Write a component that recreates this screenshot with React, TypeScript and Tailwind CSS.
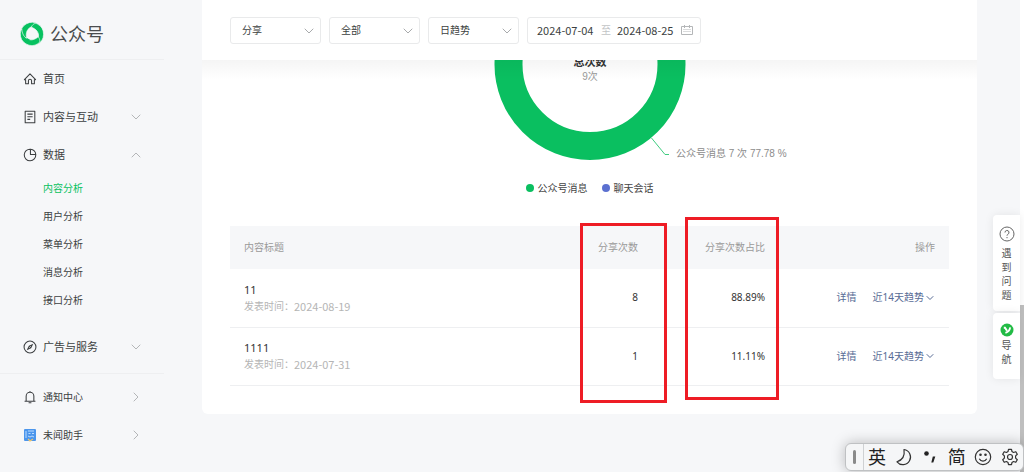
import type { ReactNode } from "react";
import { ChevronDown, ChevronRight, ChevronUp } from "lucide-react";

const SUB_ITEMS = ["内容分析", "用户分析", "菜单分析", "消息分析", "接口分析"];

const FILTERS = [
  { label: "指标", value: "分享" },
  { label: "渠道", value: "全部" },
  { label: "趋势", value: "日趋势" },
];

const ROWS = [
  { title: "11", date: "2024-08-19", count: 8, ratio: "88.89%" },
  { title: "1111", date: "2024-07-31", count: 1, ratio: "11.11%" },
];

function Logo() {
  const blade = "M.6 12.500A11.500 11.500 0 0 1 18.600 2.400C20 3.400 21 4.500 21.600 5.800C16.500 2.800 9.500 3.600 7 9C6.100 11.200 6 13.600 6.600 16C3.600 16.400 .8 15.500 .6 12.500Z";
  return (
    <svg viewBox="0 0 24 24" className="h-6 w-6" fill="#07c160" stroke="#f6f7f9" strokeWidth="0.6">
      <path d={blade} />
      <path d={blade} transform="rotate(120 12 12)" />
      <path d={blade} transform="rotate(240 12 12)" />
      <path d="M6.500 19.500V15.800l3.800 2.200z" stroke="none" />
    </svg>
  );
}

function Glyph({ children }: { children: ReactNode }) {
  return (
    <svg viewBox="0 0 16 16" className="h-3.5 w-3.5 shrink-0" fill="none" stroke="#3c3f41" strokeWidth="1.2" strokeLinejoin="round">
      {children}
    </svg>
  );
}

const HomeGlyph = <Glyph><path d="M3 8.800H1.600L8 2.200l6.400 6.600H13v4.700H9.800V10a1.800 1.800 0 0 0-3.600 0v3.500H3z" /></Glyph>;
const DocGlyph = <Glyph><path d="M2.5 1.5h11v13h-11zM5 4.7h6M5 7.7h6M5 10.7h3.2" /></Glyph>;
const PieGlyph = <Glyph><path d="M14.600 7.500A6.600 6.600 0 1 1 8.500 1.400v6.100z" /><path d="M8.500 1.400a6.600 6.600 0 0 1 6.100 6.100" /></Glyph>;
const CompassGlyph = <Glyph><circle cx="8" cy="8" r="6.8" /><path d="M11.8 4.2L9.3 9.300 4.200 11.800 6.700 6.700z" fill="#3c3f41" stroke="none" /><path d="M7.2 8.8l1.600-1.600" stroke="#f6f7f9" strokeWidth="1" /></Glyph>;
const BellGlyph = <Glyph><path d="M1.800 12.800h12.400M3.600 12.800V7a4.400 4.400 0 0 1 8.800 0v5.800M8 2.600V1.200M6.400 14.600h3.200" /></Glyph>;
const HelperGlyph = (
  <svg viewBox="0 0 14 14" className="h-3.5 w-3.5 shrink-0">
    <rect x="1" y="1" width="12" height="12" rx="1" fill="#4c96ec" />
    <path d="M3 3v7M5 3h6M5.5 5.5h2M9 5.5h2M5 8l2 1 2-1 2 1" stroke="#bcdcff" strokeWidth="1" fill="none" />
    <path d="M5 11l2 2 3-2" stroke="#efc46a" strokeWidth="1.2" fill="none" />
  </svg>
);

function NavItem({ icon, label, arrow, small }: { icon: ReactNode; label: string; arrow?: "up" | "down" | "right"; small?: boolean }) {
  const Arrow = arrow === "up" ? ChevronUp : arrow === "right" ? ChevronRight : ChevronDown;
  return (
    <a href="#" className="flex h-[38px] items-center pl-[23px] pr-[58px]">
      {icon}
      <span className={small ? "ml-1.5 text-[10px]" : "ml-1.5 text-[11px]"}>{label}</span>
      {arrow && <Arrow className="ml-auto h-4 w-4 text-[#b4b6b8]" strokeWidth={1.5} />}
    </a>
  );
}

function Sidebar() {
  return (
    <nav className="w-[202px] shrink-0">
      <div className="mr-[38px] flex h-[60px] items-center border-b border-[#eeeff1] pl-5 pt-2">
        <Logo />
        <span className="ml-1.5 text-lg leading-6 text-[#4a4c4e]">公众号</span>
      </div>
      <NavItem icon={HomeGlyph} label="首页" />
      <NavItem icon={DocGlyph} label="内容与互动" arrow="down" />
      <NavItem icon={PieGlyph} label="数据" arrow="up" />
      <ul>
        {SUB_ITEMS.map((item, i) => (
          <li key={item}>
            <a href="#" className={i === 0 ? "flex h-7 items-center pl-[43px] text-[10px] text-[#07c160]" : "flex h-7 items-center pl-[43px] text-[10px]"}>
              {item}
            </a>
          </li>
        ))}
      </ul>
      <div className="mt-3.5">
        <NavItem icon={CompassGlyph} label="广告与服务" arrow="down" />
      </div>
      <div className="mr-[38px] h-2 border-b border-[#eeeff1]" />
      <div className="pt-1">
        <NavItem icon={BellGlyph} label="通知中心" arrow="right" small />
        <NavItem icon={HelperGlyph} label="未闻助手" arrow="right" small />
      </div>
    </nav>
  );
}

const dateFont = "font-['Noto_Sans_CJK_SC',sans-serif] text-[11px]";

function Filters() {
  return (
    <div className="flex h-[60px] items-center gap-2 px-7">
      {FILTERS.map((filter) => (
        <div key={filter.label} className="relative">
          <select aria-label={filter.label} className="block h-[27px] w-[91px] appearance-none rounded-[3px] border border-[#e9eaeb] bg-white pl-[11px] text-[10px] text-[#3c3f41]">
            <option>{filter.value}</option>
          </select>
          <ChevronDown className="pointer-events-none absolute right-1 top-1.5 h-4 w-4 text-[#a8aaac]" strokeWidth={1.5} />
        </div>
      ))}
      <div className="flex h-[27px] w-[174px] items-center justify-between rounded-[3px] border border-[#e9eaeb] pl-[9px] pr-[7px] text-[#3c3f41]">
        <input aria-label="开始日期" defaultValue="2024-07-04" className={`w-[58px] ${dateFont}`} />
        <span className="text-[10px] text-[#c2c4c6]">至</span>
        <input aria-label="结束日期" defaultValue="2024-08-25" className={`w-[58px] ${dateFont}`} />
        <svg viewBox="0 0 12 12" className="h-3 w-3" fill="none" stroke="#b4b6b8">
          <path d="M.5 2.5h11v8H.5zM3.5 1v3M8.5 1v3" />
          <path d="M2.5 5.5h7M2.5 7.5h7" strokeDasharray="1 1" />
        </svg>
      </div>
    </div>
  );
}

function ShareChart() {
  return (
    <div className="relative flex flex-col items-center">
      <svg width="400" height="118" viewBox="0 0 400 118">
        <circle cx="200" cy="4.5" r="81.5" fill="none" stroke="#0abf60" strokeWidth="28" />
        <text x="200" y="6" textAnchor="middle" fontSize="11" fontWeight="700" fill="#333">总次数</text>
        <text x="200" y="20" textAnchor="middle" fontSize="10" fill="#999" className="font-['Liberation_Sans','Noto_Sans_CJK_SC',sans-serif]">9次</text>
        <path d="M261.500 78L275 94.500h4" fill="none" stroke="#3fcd80" />
        <text x="286" y="97" fontSize="10" fill="#8c8c8c" className="font-['Liberation_Sans','Noto_Sans_CJK_SC',sans-serif]">公众号消息 7 次 77.78 %</text>
      </svg>
      <div className="pointer-events-none absolute inset-x-0 top-0 h-5 bg-linear-to-b from-black/4 to-transparent" />
      <div className="flex h-5 items-center gap-3.5 text-[10px] text-[#444]">
        <span className="flex items-center gap-1"><i className="h-2 w-2 rounded-full bg-[#0abf60]" />公众号消息</span>
        <span className="flex items-center gap-1"><i className="h-2 w-2 rounded-full bg-[#5b70d0]" />聊天会话</span>
      </div>
    </div>
  );
}

function ShareTable() {
  return (
    <div className="relative mx-7 mt-7">
      <table className="w-full table-fixed text-[10px]">
        <thead className="bg-[#f6f7f9] text-[#9a9a9a]">
          <tr className="h-[43px]">
            <th className="px-3.5 text-left font-normal">内容标题</th>
            <th className="w-[110px] px-3.5 text-right font-normal">分享次数</th>
            <th className="w-[127px] px-3.5 text-right font-normal">分享次数占比</th>
            <th className="w-[170px] px-3.5 text-right font-normal">操作</th>
          </tr>
        </thead>
        <tbody>
          {ROWS.map((row) => (
            <tr key={row.title} className="h-[58px] border-b border-[#eeeff1]">
              <td className="px-3.5 leading-4">
                <p className="text-[11px] text-[#333]">{row.title}</p>
                <p className="flex text-[#b5b5b5]">发表时间：<span className={dateFont}>{row.date}</span></p>
              </td>
              <td className="px-3.5 text-right text-[#333]">{row.count}</td>
              <td className="px-3.5 text-right text-[#333]">{row.ratio}</td>
              <td className="px-3.5 text-[#576b95]">
                <div className="flex items-center justify-end gap-4">
                  <a href="#">详情</a>
                  <button type="button" className="flex items-center">
                    近14天趋势<ChevronDown className="-mr-px h-3 w-3" strokeWidth={2} />
                  </button>
                </div>
              </td>
            </tr>
          ))}
        </tbody>
      </table>
      <div className="pointer-events-none absolute -top-[3px] right-[282px] h-[180px] w-[87px] border-[3px] border-[#ee1c25]" />
      <div className="pointer-events-none absolute -top-[9px] right-[170px] h-[183px] w-[94px] border-[3px] border-[#ee1c25]" />
    </div>
  );
}

function FloatingHelp() {
  return (
    <aside className="absolute right-1 top-[215px] flex w-[27px] flex-col gap-0.5 text-center text-[10px] leading-[14px] text-[#555]">
      <a href="#" className="flex h-24 flex-col items-center rounded-l-sm bg-white px-2 pt-[11px] shadow-[0_0_10px_rgba(0,0,0,0.08)]">
        <svg viewBox="0 0 16 16" className="mb-1 h-4 w-4 shrink-0" fill="none" stroke="#666">
          <circle cx="8" cy="8" r="7" />
          <path d="M6 6.500a2 2 0 1 1 2.800 1.800Q8 8.700 8 9.700M8 11v1.200" />
        </svg>
        遇到问题
      </a>
      <a href="#" className="flex h-[66px] flex-col items-center rounded-l-sm bg-white px-2 pt-2.5 shadow-[0_0_10px_rgba(0,0,0,0.08)]">
        <svg viewBox="0 0 14 14" className="mb-px h-3.5 w-3.5 shrink-0">
          <circle cx="7" cy="7" r="6.500" fill="#22bb45" />
          <path d="M3.800 4.800h1.200l2 3M10.200 4.400Q9.500 8.600 5.400 9.800" stroke="#fff" strokeWidth="1.900" fill="none" />
        </svg>
        导航
      </a>
    </aside>
  );
}

function InputBar() {
  return (
    <div className="absolute bottom-px right-0 flex h-7 w-[179px] items-center rounded-md border border-[#bfc1c3] bg-[#f5f6f7] text-lg leading-6 text-[#222] shadow-[0_0_14px_rgba(0,0,0,0.25)]">
      <div className="flex h-full w-[18px] shrink-0 items-center justify-center border-r border-[#cfd1d3]">
        <div className="h-3.5 w-[3px] rounded-full bg-[#8a8a8a]" />
      </div>
      <div className="flex flex-1 items-center justify-between px-1">
        <button type="button">英</button>
        <svg viewBox="0 0 18 18" className="h-[18px] w-[18px]" fill="none" stroke="#333" strokeWidth="1.200" strokeLinejoin="round">
          <path d="M9 1.500A7.600 7.600 0 1 1 2 13.800Q10.500 11 9 1.500z" />
        </svg>
        <svg viewBox="0 0 18 18" className="h-[18px] w-[18px]" fill="#222">
          <circle cx="5.500" cy="5.500" r="2.300" />
          <path d="M11.800 8.500h2.500l-2 6h-2z" />
        </svg>
        <button type="button">简</button>
        <svg viewBox="0 0 18 18" className="h-[18px] w-[18px]" fill="none" stroke="#333" strokeWidth="1.200">
          <circle cx="9" cy="9" r="7.700" />
          <path d="M5.300 10.800a4.100 4.100 0 0 0 7.400 0" />
          <circle cx="6.500" cy="6.800" r=".7" fill="#333" />
          <circle cx="11.500" cy="6.800" r=".7" fill="#333" />
        </svg>
        <svg viewBox="0 0 18 18" className="h-[18px] w-[18px]" fill="none" stroke="#333" strokeWidth="1.200" strokeLinejoin="round">
          <path d="M7.500 1.300h3l.5 2.300 1.500.9 2.300-.8 1.500 2.600-1.700 1.600v2.200l1.700 1.600-1.500 2.600-2.300-.8-1.500.9-.5 2.300h-3L7 14.400l-1.500-.9-2.300.8-1.500-2.600 1.700-1.600V7.900L1.700 6.300l1.500-2.600 2.300.8L7 3.600z" />
          <circle cx="9" cy="9" r="2.500" />
        </svg>
      </div>
    </div>
  );
}

export default function App() {
  return (
    <div className="relative flex min-h-screen overflow-hidden bg-[#f6f7f9] pr-[47px] font-['Noto_Sans','Noto_Sans_CJK_SC',sans-serif] text-[#3c3f41]">
      <Sidebar />
      <main className="min-w-0 flex-1 self-start rounded-b-md bg-white pb-7">
        <Filters />
        <ShareChart />
        <ShareTable />
      </main>
      <div className="absolute inset-y-0 right-0 w-1 bg-white">
        <div className="mt-[305px] h-full bg-[#bfbfbf]" />
      </div>
      <FloatingHelp />
      <InputBar />
    </div>
  );
}
